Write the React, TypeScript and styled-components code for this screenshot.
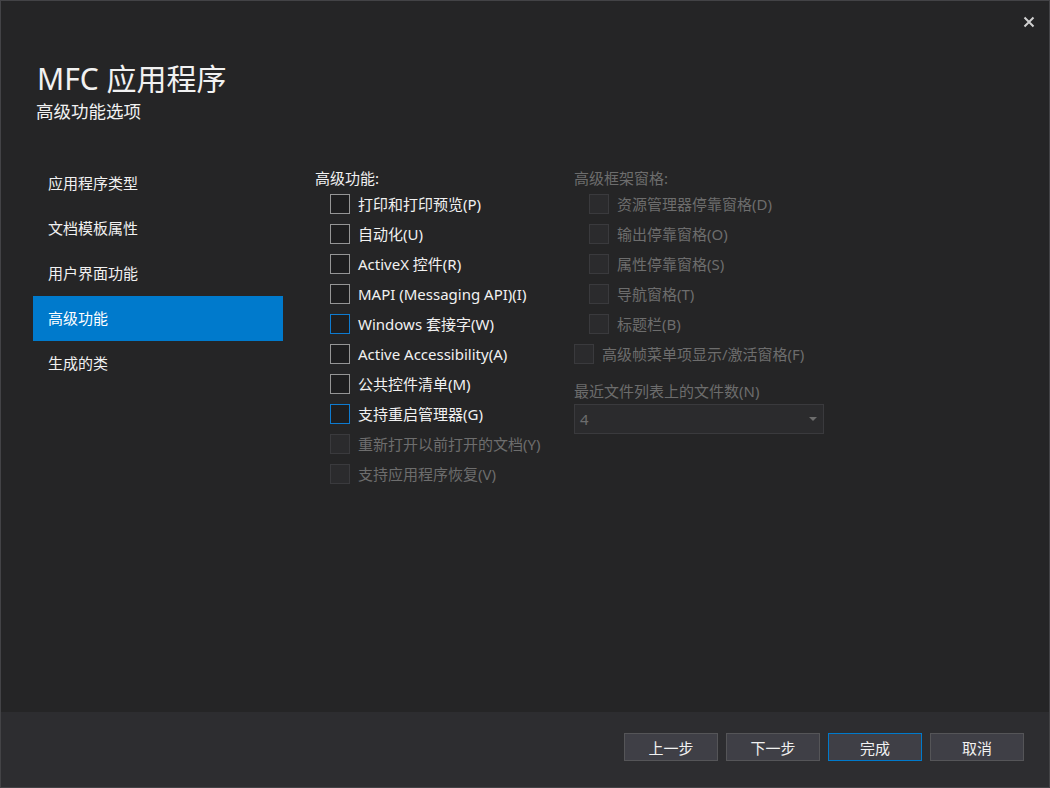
import styled, { createGlobalStyle } from "styled-components";

const GlobalStyle = createGlobalStyle`
  html, body {
    margin: 0;
    padding: 0;
    background: #252526;
  }
  body {
    font-family: "Noto Sans", "Noto Sans CJK SC", sans-serif;
    color: #f1f1f1;
  }
`;

const Window = styled.div`
  width: 1050px;
  height: 788px;
  box-sizing: border-box;
  border: 1px solid #434346;
  background: #252526;
  display: flex;
  flex-direction: column;
  position: relative;
`;

const CloseButton = styled.div`
  position: absolute;
  top: 15px;
  right: 14px;
  width: 12px;
  height: 12px;
  display: flex;
  align-items: center;
  justify-content: center;
`;

const Header = styled.div`
  padding: 60px 0 0 36px;
  display: flex;
  flex-direction: column;
`;

const Title = styled.div`
  font-size: 30px;
  line-height: 36px;
  color: #f1f1f1;
`;

const Subtitle = styled.div`
  font-size: 17.5px;
  line-height: 20px;
  margin-top: 4px;
  color: #f1f1f1;
  margin-left: -1px;
`;

const Main = styled.div`
  flex: 1;
  display: flex;
  padding: 40px 0 0 32px;
`;

const Nav = styled.div`
  width: 250px;
  display: flex;
  flex-direction: column;
`;

const NavItem = styled.div<{ $active?: boolean }>`
  height: 45px;
  line-height: 44px;
  padding-left: 15px;
  font-size: 15px;
  color: ${(p) => (p.$active ? "#ffffff" : "#f1f1f1")};
  background: ${(p) => (p.$active ? "#007acc" : "transparent")};
`;

const Content = styled.div`
  display: flex;
  padding: 6px 0 0 32px;
`;

const Column = styled.div<{ $width?: number }>`
  display: flex;
  flex-direction: column;
  width: ${(p) => (p.$width ? `${p.$width}px` : "auto")};
`;

const GroupLabel = styled.div<{ $disabled?: boolean }>`
  font-size: 15px;
  line-height: 22px;
  color: ${(p) => (p.$disabled ? "#6d6d6d" : "#f1f1f1")};
`;

const Row = styled.div<{ $indent?: boolean }>`
  height: 30px;
  display: flex;
  align-items: center;
  gap: 8px;
  padding-left: ${(p) => (p.$indent ? "15px" : "0")};
`;

type BoxState = "normal" | "focus" | "disabled";

const Box = styled.span<{ $state: BoxState }>`
  width: 20px;
  height: 20px;
  box-sizing: border-box;
  flex-shrink: 0;
  border: 1px solid
    ${(p) =>
      p.$state === "focus" ? "#0e7bd0" : p.$state === "disabled" ? "#3a3a3d" : "#959595"};
  background: ${(p) => (p.$state === "disabled" ? "#2b2b2d" : "#1e1e1f")};
`;

const RowText = styled.span<{ $disabled?: boolean }>`
  font-size: 15px;
  line-height: 20px;
  white-space: nowrap;
  color: ${(p) => (p.$disabled ? "#6d6d6d" : "#f1f1f1")};
`;

const FieldLabel = styled.div`
  margin-top: 12px;
  font-size: 15px;
  line-height: 20px;
  color: #6d6d6d;
`;

const Combo = styled.div`
  margin-top: 3px;
  width: 250px;
  height: 30px;
  box-sizing: border-box;
  border: 1px solid #3a3a3d;
  background: #2b2b2d;
  display: flex;
  align-items: center;
  justify-content: space-between;
  padding: 0 6px 0 5px;
  font-size: 15px;
  color: #6d6d6d;
`;

const Footer = styled.div`
  height: 75px;
  background: #2d2d30;
  display: flex;
  justify-content: flex-end;
  gap: 8px;
  padding: 21px 25px 0 0;
  box-sizing: border-box;
`;

const Button = styled.div<{ $primary?: boolean }>`
  width: 94px;
  height: 28px;
  box-sizing: border-box;
  border: 1px solid ${(p) => (p.$primary ? "#007acc" : "#555558")};
  background: #3f3f46;
  color: #f1f1f1;
  font-size: 15px;
  display: flex;
  align-items: center;
  justify-content: center;
`;

type Item = { label: string; state: BoxState };

const leftItems: Item[] = [
  { label: "打印和打印预览(P)", state: "normal" },
  { label: "自动化(U)", state: "normal" },
  { label: "ActiveX 控件(R)", state: "normal" },
  { label: "MAPI (Messaging API)(I)", state: "normal" },
  { label: "Windows 套接字(W)", state: "focus" },
  { label: "Active Accessibility(A)", state: "normal" },
  { label: "公共控件清单(M)", state: "normal" },
  { label: "支持重启管理器(G)", state: "focus" },
  { label: "重新打开以前打开的文档(Y)", state: "disabled" },
  { label: "支持应用程序恢复(V)", state: "disabled" },
];

const paneItems = [
  "资源管理器停靠窗格(D)",
  "输出停靠窗格(O)",
  "属性停靠窗格(S)",
  "导航窗格(T)",
  "标题栏(B)",
];

const navItems = ["应用程序类型", "文档模板属性", "用户界面功能", "高级功能", "生成的类"];

export default function App() {
  return (
    <>
      <GlobalStyle />
      <Window>
        <CloseButton>
          <svg width="12" height="12" viewBox="0 0 12 12">
            <path d="M1.5 1.5 L10.5 10.5 M10.5 1.5 L1.5 10.5" stroke="#d0d0d0" strokeWidth="2" />
          </svg>
        </CloseButton>
        <Header>
          <Title>MFC 应用程序</Title>
          <Subtitle>高级功能选项</Subtitle>
        </Header>
        <Main>
          <Nav>
            {navItems.map((n) => (
              <NavItem key={n} $active={n === "高级功能"}>
                {n}
              </NavItem>
            ))}
          </Nav>
          <Content>
            <Column $width={259}>
              <GroupLabel>高级功能:</GroupLabel>
              {leftItems.map((it) => (
                <Row key={it.label} $indent>
                  <Box $state={it.state} />
                  <RowText $disabled={it.state === "disabled"}>{it.label}</RowText>
                </Row>
              ))}
            </Column>
            <Column>
              <GroupLabel $disabled>高级框架窗格:</GroupLabel>
              {paneItems.map((p) => (
                <Row key={p} $indent>
                  <Box $state="disabled" />
                  <RowText $disabled>{p}</RowText>
                </Row>
              ))}
              <Row>
                <Box $state="disabled" />
                <RowText $disabled>高级帧菜单项显示/激活窗格(F)</RowText>
              </Row>
              <FieldLabel>最近文件列表上的文件数(N)</FieldLabel>
              <Combo>
                <span>4</span>
                <svg width="8" height="4" viewBox="0 0 8 4">
                  <path d="M0 0 L8 0 L4 4 Z" fill="#6d6d6d" />
                </svg>
              </Combo>
            </Column>
          </Content>
        </Main>
        <Footer>
          <Button>上一步</Button>
          <Button>下一步</Button>
          <Button $primary>完成</Button>
          <Button>取消</Button>
        </Footer>
      </Window>
    </>
  );
}
